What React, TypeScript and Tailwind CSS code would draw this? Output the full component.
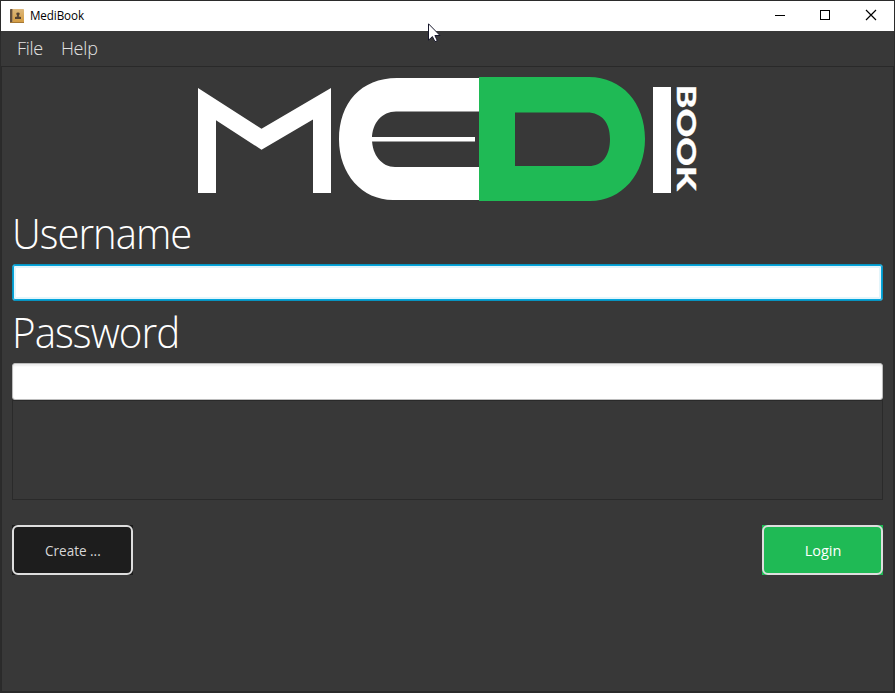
import React from 'react';

function BookIcon() {
  return (
    <svg width="14" height="14" viewBox="0 0 14 14" className="mb-px shrink-0">
      <defs>
        <linearGradient id="cover" x1="0" y1="0" x2="0" y2="1">
          <stop offset="0" stopColor="#ddb87c" />
          <stop offset="1" stopColor="#d39a3e" />
        </linearGradient>
      </defs>
      <rect width="14" height="14" rx="0.8" fill="url(#cover)" />
      <path d="M0 1q0-1 1-1h1v13H0z" fill="#65513e" />
      <path d="M2 0h1v13H2z" fill="#b28d5c" />
      <path d="M0 13h14v1H0z" fill="#a57835" />
      <path d="M6.3 4.6q0-1.2 1.7-1.2t1.7 1.2Q9.6 6.200 8.800 6.800v.7L11 8.1V10H5V8.1l2.2-.6v-.7Q6.400 6.200 6.300 4.600z" fill="#544232" />
    </svg>
  );
}

function TitleBar() {
  return (
    <header className="flex h-[30px] shrink-0 items-center bg-white pl-[9px] text-black">
      <BookIcon />
      <span className="ml-[6px] origin-left scale-x-[0.97] font-['Open_Sans','Noto_Sans',sans-serif] text-[12px] leading-[16px] tracking-[-0.1px]">MediBook</span>
      <div className="ml-auto flex items-center">
        <svg width="120" height="30" viewBox="0 0 120 30" fill="none" stroke="#000" shapeRendering="crispEdges">
          <path d="M1 14.5h10" />
          <rect x="46.5" y="9.5" width="9" height="9" />
          <path d="M92 9l10 10M102 9l-10 10" strokeWidth="1.2" shapeRendering="auto" />
        </svg>
      </div>
    </header>
  );
}

function Logo() {
  return (
    <svg width="530" height="130" viewBox="193 74 530 130" className="ml-[181px] shrink-0" role="img" aria-label="MediBook">
      <path d="M198 88L261.5 128.7L331 88V193H313V119.5L261.5 149.7L216 120.3V193H198z" fill="#fff" />
      <path d="M479 78H397C361 78 339 103 339 139.500C339 174 362 200 393 200H479V167H395C382 167 372 155 372 139C372 123 382 111.500 396 111.500H479z" fill="#fff" />
      <path d="M371 137h104v4.500h-104z" fill="#fff" />
      <path fillRule="evenodd" d="M479 77H589C622 77 645 103 645 139C645 174 622 201 590 201H479zM515 112.500V166H589C602 166 610 156 610 139C610 123 602 112.500 587 112.500z" fill="#1fba55" />
      <path d="M653 87h18v106h-18z" fill="#fff" />
      <text transform="translate(677.2 84.800) rotate(90)" textLength="106" lengthAdjust="spacingAndGlyphs" className="fill-white stroke-white font-['Lato',sans-serif] text-[27px] font-black" strokeWidth="0.3">BOOK</text>
    </svg>
  );
}

export default function App() {
  return (
    <div className="relative flex h-[693px] w-[895px] flex-col overflow-hidden border border-[#2b2b2b] bg-[#383838] font-['Open_Sans','Noto_Sans',sans-serif]">
      <TitleBar />
      <nav className="flex h-[36px] shrink-0 items-start gap-[18px] border-b border-[#292929] pl-[16px] text-[18px] font-light leading-[34px] text-[#e3e3e3]">
        <span className="tracking-[-0.3px]">File</span>
        <span className="tracking-[-0.2px]">Help</span>
      </nav>
      <main className="flex grow flex-col border-x border-b border-[#2a2a2a] px-[10px] pt-[7px]">
        <Logo />
        <label htmlFor="username" className="h-[60px] w-max origin-left scale-x-[0.952] text-[42px] font-light leading-[58px] tracking-[-1px] text-white">Username</label>
        <input id="username" className="h-[37px] w-full shrink-0 rounded-[3px] border border-[#0794c1] bg-white shadow-[inset_0_0_0_1px_#05a5dc,inset_0_0_0_3px_#e3f5fb] outline-none" />
        <label htmlFor="password" className="h-[62px] w-max origin-left scale-x-[0.96] text-[42px] font-light leading-[62px] tracking-[-1px] text-white">Password</label>
        <input id="password" type="password" className="h-[37px] w-full shrink-0 rounded-[3px] border border-[#bcbcbc] bg-white shadow-[inset_0_2px_2px_#eeeeee] outline-none" />
        <div className="h-[100px] shrink-0 border border-[#2a2a2a]" />
        <div className="mt-[25px] flex justify-between text-[14.5px] leading-[20px]">
          <button className="h-[50px] w-[121px] bg-[#1d1d1d]">
            <span className="flex h-full items-center justify-center rounded-[6px] border-2 border-[#dedede] pt-[2px] text-[#d8d8d8]"><span className="scale-x-[0.93]">Create ...</span></span>
          </button>
          <button className="h-[50px] w-[121px] bg-[#1fba55]">
            <span className="flex h-full items-center justify-center rounded-[6px] border-2 border-[#dedede] pt-[2px] pl-px text-white"><span>Login</span></span>
          </button>
        </div>
      </main>
      <svg className="absolute left-[427px] top-[22px]" width="13" height="20" viewBox="0 0 13 20">
        <path d="M.5.800V17.200L4.400 13.600L7 18.700L9.300 17.600L6.900 12.500H12z" fill="#fff" stroke="#17172b" />
      </svg>
    </div>
  );
}
